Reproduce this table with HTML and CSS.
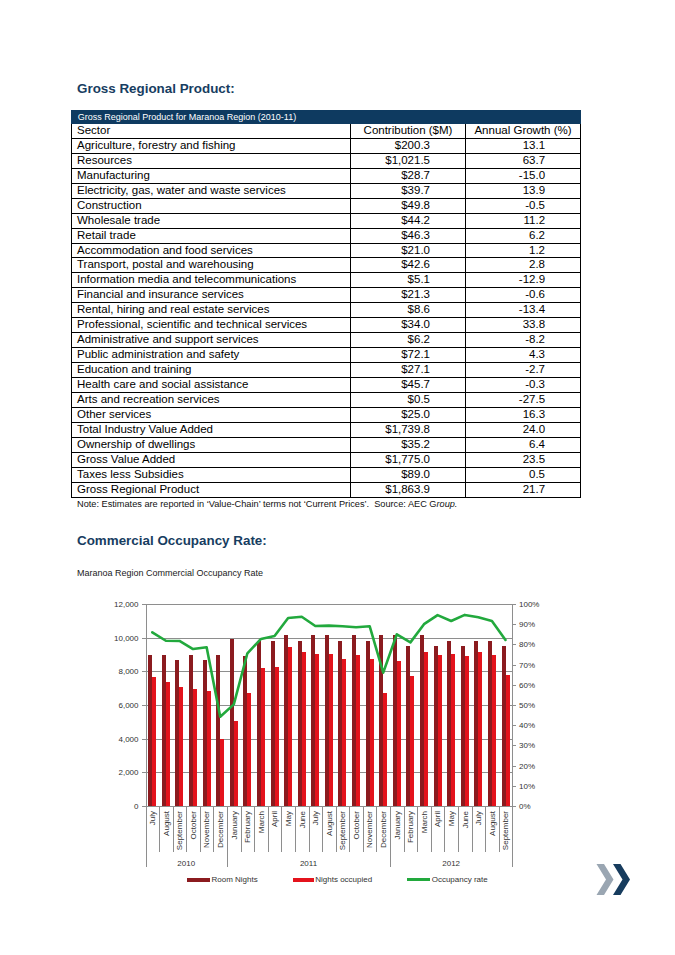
FILE: index.html
```html
<!DOCTYPE html>
<html lang="en">
<head>
<meta charset="utf-8">
<title>Maranoa Region – Gross Regional Product</title>
<link rel="stylesheet" href="styles.css">
</head>
<body>
<main class="page">
  <h2 class="section-title title-grp">Gross Regional Product:</h2>
  <table class="grp-table">
    <colgroup><col class="col-sector"><col class="col-num"><col class="col-num"></colgroup>
    <thead>
      <tr class="caption-row"><th colspan="3">Gross Regional Product for Maranoa Region (2010-11)</th></tr>
      <tr class="head-row"><th class="sector">Sector</th><th class="num-head">Contribution ($M)</th><th class="num-head">Annual Growth (%)</th></tr>
    </thead>
    <tbody>
      <tr><td>Agriculture, forestry and fishing</td><td class="num">$200.3</td><td class="num">13.1</td></tr>
      <tr><td>Resources</td><td class="num">$1,021.5</td><td class="num">63.7</td></tr>
      <tr><td>Manufacturing</td><td class="num">$28.7</td><td class="num">-15.0</td></tr>
      <tr><td>Electricity, gas, water and waste services</td><td class="num">$39.7</td><td class="num">13.9</td></tr>
      <tr><td>Construction</td><td class="num">$49.8</td><td class="num">-0.5</td></tr>
      <tr><td>Wholesale trade</td><td class="num">$44.2</td><td class="num">11.2</td></tr>
      <tr><td>Retail trade</td><td class="num">$46.3</td><td class="num">6.2</td></tr>
      <tr><td>Accommodation and food services</td><td class="num">$21.0</td><td class="num">1.2</td></tr>
      <tr><td>Transport, postal and warehousing</td><td class="num">$42.6</td><td class="num">2.8</td></tr>
      <tr><td>Information media and telecommunications</td><td class="num">$5.1</td><td class="num">-12.9</td></tr>
      <tr><td>Financial and insurance services</td><td class="num">$21.3</td><td class="num">-0.6</td></tr>
      <tr><td>Rental, hiring and real estate services</td><td class="num">$8.6</td><td class="num">-13.4</td></tr>
      <tr><td>Professional, scientific and technical services</td><td class="num">$34.0</td><td class="num">33.8</td></tr>
      <tr><td>Administrative and support services</td><td class="num">$6.2</td><td class="num">-8.2</td></tr>
      <tr><td>Public administration and safety</td><td class="num">$72.1</td><td class="num">4.3</td></tr>
      <tr><td>Education and training</td><td class="num">$27.1</td><td class="num">-2.7</td></tr>
      <tr><td>Health care and social assistance</td><td class="num">$45.7</td><td class="num">-0.3</td></tr>
      <tr><td>Arts and recreation services</td><td class="num">$0.5</td><td class="num">-27.5</td></tr>
      <tr><td>Other services</td><td class="num">$25.0</td><td class="num">16.3</td></tr>
      <tr><td>Total Industry Value Added</td><td class="num">$1,739.8</td><td class="num">24.0</td></tr>
      <tr><td>Ownership of dwellings</td><td class="num">$35.2</td><td class="num">6.4</td></tr>
      <tr><td>Gross Value Added</td><td class="num">$1,775.0</td><td class="num">23.5</td></tr>
      <tr><td>Taxes less Subsidies</td><td class="num">$89.0</td><td class="num">0.5</td></tr>
      <tr><td>Gross Regional Product</td><td class="num">$1,863.9</td><td class="num">21.7</td></tr>
    </tbody>
  </table>
  <p class="note">Note: Estimates are reported in ‘Value-Chain’ terms not ‘Current Prices’.&nbsp; Source: AEC G<em>roup.</em></p>

  <h2 class="section-title title-cor">Commercial Occupancy Rate:</h2>
  <p class="chart-title">Maranoa Region Commercial Occupancy Rate</p>
  <svg class="chart" id="occ-chart" viewBox="100 579 450 285" width="450" height="285" role="img" aria-label="Maranoa Region Commercial Occupancy Rate chart"></svg>
  <div class="chart-footer">
    <ul class="legend">
      <li class="legend-item"><span class="swatch swatch-room"></span>Room Nights</li>
      <li class="legend-item"><span class="swatch swatch-occ"></span>Nights occupied</li>
      <li class="legend-item"><span class="swatch swatch-rate"></span>Occupancy rate</li>
    </ul>
    <svg class="logo" viewBox="595 864 36 31" width="36" height="31" aria-hidden="true">
      <polygon class="chev-grey" points="596.5,864 604,864 613.5,879.5 604,895 596.5,895 606,879.5"/>
      <polygon class="chev-navy" points="613,864 620.5,864 630,879.5 620.5,895 613,895 622.5,879.5"/>
    </svg>
  </div>
</main>
<script src="script.js"></script>
</body>
</html>
```

FILE: styles.css
```css
html, body {
  margin: 0;
  padding: 0;
  background: #ffffff;
}

body {
  font-family: "Liberation Sans", Arial, sans-serif;
  color: #000000;
}

.page {
  width: 675px;
  box-sizing: border-box;
  padding: 81.4px 0 0 71px;
}

.section-title {
  margin: 0 0 0 6px;
  font-size: 13.4px;
  line-height: 16px;
  font-weight: 700;
  color: #173d61;
}

/* ---------- table ---------- */
.grp-table {
  margin-top: 12.2px;
  width: 509px;
  border-collapse: collapse;
  table-layout: fixed;
  font-size: 11.5px;
}

.col-sector { width: 279px; }
.col-num { width: 115px; }

.grp-table th,
.grp-table td {
  border: 1px solid #000000;
  padding: 0 5px;
  line-height: 13.95px;
  white-space: nowrap;
  font-weight: 400;
  text-align: left;
}

.caption-row th {
  background: #0e3a60;
  border-color: #0e3a60;
  color: #ffffff;
  font-size: 9px;
  line-height: 12.3px;
  padding-left: 5.7px;
}

.head-row .num-head {
  text-align: center;
  padding: 0;
}

.grp-table td.num {
  text-align: right;
  padding-right: 35px;
}

.note {
  margin: 0;
  padding-left: 6px;
  font-size: 9.2px;
  line-height: 12px;
  color: #111111;
}

.note em {
  font-style: italic;
}

.title-cor {
  margin-top: 23.2px;
}

.chart-title {
  margin: 18.2px 0 0 6px;
  font-size: 9px;
  line-height: 12px;
  color: #1a1a1a;
}

/* ---------- chart ---------- */
.chart {
  display: block;
  margin-left: 29px;
  overflow: visible;
}

.chart .grid line {
  stroke: #8e8e8e;
  stroke-width: 1;
  shape-rendering: crispEdges;
}

.chart .bar-room {
  fill: #8b1b1f;
  shape-rendering: crispEdges;
}

.chart .bar-occ {
  fill: #e4131c;
  shape-rendering: crispEdges;
}

.chart .rate-line {
  fill: none;
  stroke: #22a93d;
  stroke-width: 2.6;
  stroke-linejoin: round;
  stroke-linecap: round;
}

.chart text {
  font-family: "Liberation Sans", Arial, sans-serif;
  font-size: 8px;
  fill: #333333;
}

/* ---------- footer: legend + logo ---------- */
.chart-footer {
  display: flex;
  align-items: center;
  height: 31px;
}

.legend {
  display: flex;
  align-items: center;
  gap: 35px;
  margin: 0 0 0 116px;
  padding: 0;
  list-style: none;
  font-size: 8px;
  line-height: 10px;
  color: #333333;
}

.legend-item {
  display: flex;
  align-items: center;
  gap: 1.5px;
}

.swatch {
  display: block;
  width: 23px;
  height: 4px;
}

.swatch-room { background: #8b1b1f; }
.swatch-occ { background: #e4131c; width: 21px; }
.swatch-rate { background: #22a93d; height: 2.5px; }

.logo {
  display: block;
  margin-left: auto;
  margin-right: 44px;
}

.chev-grey { fill: #9aa6b2; }
.chev-navy { fill: #173c5e; }
```

FILE: script.js
```js
(function () {
  var NS = 'http://www.w3.org/2000/svg';
  var svg = document.getElementById('occ-chart');
  if (!svg) return;

  function add(parent, tag, attrs, text) {
    var e = document.createElementNS(NS, tag);
    for (var k in attrs) {
      if (Object.prototype.hasOwnProperty.call(attrs, k)) e.setAttribute(k, attrs[k]);
    }
    if (text !== undefined) e.textContent = text;
    parent.appendChild(e);
    return e;
  }

  var months = ['July', 'August', 'September', 'October', 'November', 'December',
    'January', 'February', 'March', 'April', 'May', 'June', 'July', 'August',
    'September', 'October', 'November', 'December',
    'January', 'February', 'March', 'April', 'May', 'June', 'July', 'August', 'September'];
  var room = [9000, 9000, 8700, 9000, 8700, 9000, 9920, 8930, 9820, 9820, 10140, 9820, 10140,
    10140, 9820, 10140, 9820, 10140, 10140, 9500, 10140, 9500, 9820, 9500, 9820, 9820, 9500];
  var occ = [7680, 7370, 7070, 6970, 6810, 3960, 5070, 6730, 8200, 8240, 9430, 9170, 9010,
    9010, 8740, 8970, 8740, 6700, 8620, 7700, 9130, 8980, 9010, 8930, 9150, 8970, 7780];
  var rate = [86.0, 81.8, 81.7, 77.7, 78.6, 44.2, 50.3, 75.6, 82.7, 84.2, 93.1, 93.7, 89.1,
    89.3, 89.0, 88.5, 89.0, 66.0, 85.0, 81.0, 90.0, 94.5, 91.6, 94.6, 93.4, 91.6, 82.2];

  var N = months.length;
  var X0 = 145.5, W = 13.585, X1 = X0 + W * N;
  var YT = 604, YB = 806, H = YB - YT;

  function yv(v) { return YB - v * H / 12000; }
  function yp(p) { return YB - p * H / 100; }
  function crisp(v) { return Math.round(v) + 0.5; }

  /* grid + axes */
  var grid = add(svg, 'g', { 'class': 'grid' });
  for (var k = 0; k <= 6; k++) {
    var y = YT + k * H / 6;
    var val = 12 - 2 * k;
    add(grid, 'line', { x1: X0 - 3.5, x2: X1, y1: crisp(y), y2: crisp(y) });
    add(svg, 'text', { x: 138.5, y: (y + 2.9).toFixed(2), 'text-anchor': 'end' },
      val === 0 ? '0' : val + ',000');
  }
  add(grid, 'line', { x1: crisp(X0), x2: crisp(X0), y1: YT, y2: YB });
  add(grid, 'line', { x1: crisp(X1), x2: crisp(X1), y1: YT, y2: YB });
  for (var p = 0; p <= 10; p++) {
    var yy = yp(p * 10);
    add(grid, 'line', { x1: X1, x2: X1 + 3.5, y1: crisp(yy), y2: crisp(yy) });
    add(svg, 'text', { x: 519, y: (yy + 2.9).toFixed(2) }, (p * 10) + '%');
  }

  /* bars */
  var bars = add(svg, 'g', {});
  for (var i = 0; i < N; i++) {
    var cx = X0 + W * (i + 0.5);
    var yr = yv(room[i]), yo = yv(occ[i]);
    add(bars, 'rect', { x: (cx - 4).toFixed(2), y: yr.toFixed(2), width: 4, height: (YB - yr).toFixed(2), 'class': 'bar-room' });
    add(bars, 'rect', { x: cx.toFixed(2), y: yo.toFixed(2), width: 4, height: (YB - yo).toFixed(2), 'class': 'bar-occ' });
  }

  /* occupancy line */
  var pts = rate.map(function (r, j) {
    return (X0 + W * (j + 0.5)).toFixed(2) + ',' + yp(r).toFixed(2);
  }).join(' ');
  add(svg, 'polyline', { points: pts, 'class': 'rate-line' });

  /* category axis */
  var yearBreaks = [0, 6, 18, 27];
  var axis = add(svg, 'g', { 'class': 'grid' });
  for (var t = 0; t <= N; t++) {
    var x = crisp(X0 + W * t);
    var isYear = yearBreaks.indexOf(t) >= 0;
    add(axis, 'line', { x1: x, x2: x, y1: YB, y2: isYear ? 867 : 851.7 });
  }
  for (var m = 0; m < N; m++) {
    var mx = X0 + W * (m + 0.5) + 2.8;
    add(svg, 'text', {
      'text-anchor': 'end',
      transform: 'translate(' + mx.toFixed(2) + ' 811) rotate(-90)'
    }, months[m]);
  }
  var years = [['2010', 3], ['2011', 12], ['2012', 22.5]];
  years.forEach(function (yrs) {
    add(svg, 'text', { x: (X0 + W * yrs[1]).toFixed(2), y: 866, 'text-anchor': 'middle' }, yrs[0]);
  });
})();
```
